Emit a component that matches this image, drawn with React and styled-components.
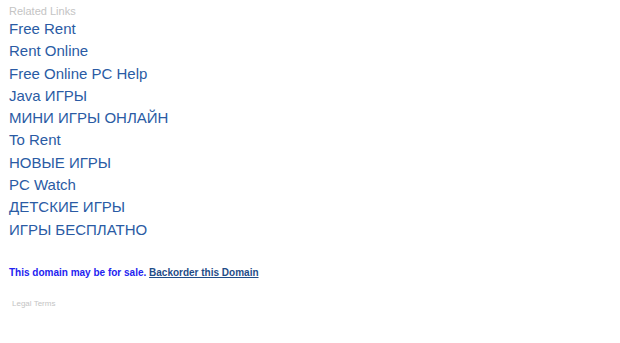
import React from "react";
import styled, { createGlobalStyle } from "styled-components";

const Global = createGlobalStyle`
  body {
    margin: 0;
    background: #fff;
    font-family: Arial, "Liberation Sans", sans-serif;
  }
`;

const Page = styled.div`
  padding: 5px 0 0 9px;
`;

const Heading = styled.div`
  font-size: 11px;
  color: #c4c4c4;
  line-height: 13px;
`;

const LinkList = styled.ul`
  list-style: none;
  margin: 0;
  padding: 0;
`;

const Item = styled.li`
  font-size: 15px;
  line-height: 22.3px;
`;

const RelLink = styled.a`
  color: #2a5ba4;
  text-decoration: none;
`;

const SaleLine = styled.div`
  margin-top: 26px;
  font-size: 10px;
  line-height: 12px;
  font-weight: bold;
  color: #2323f0;
`;

const Backorder = styled.a`
  color: #1f4d88;
  text-decoration: underline;
`;

const Legal = styled.div`
  margin: 20px 0 0 3px;
  font-size: 8px;
  color: #c4c4c4;
`;

const links = [
  "Free Rent",
  "Rent Online",
  "Free Online PC Help",
  "Java ИГРЫ",
  "МИНИ ИГРЫ ОНЛАЙН",
  "To Rent",
  "НОВЫЕ ИГРЫ",
  "PC Watch",
  "ДЕТСКИЕ ИГРЫ",
  "ИГРЫ БЕСПЛАТНО",
];

export default function App() {
  return (
    <>
      <Global />
      <Page>
        <Heading>Related Links</Heading>
        <LinkList>
          {links.map((l) => (
            <Item key={l}>
              <RelLink href="#">{l}</RelLink>
            </Item>
          ))}
        </LinkList>
        <SaleLine>
          This domain may be for sale. <Backorder href="#">Backorder this Domain</Backorder>
        </SaleLine>
        <Legal>Legal Terms</Legal>
      </Page>
    </>
  );
}
